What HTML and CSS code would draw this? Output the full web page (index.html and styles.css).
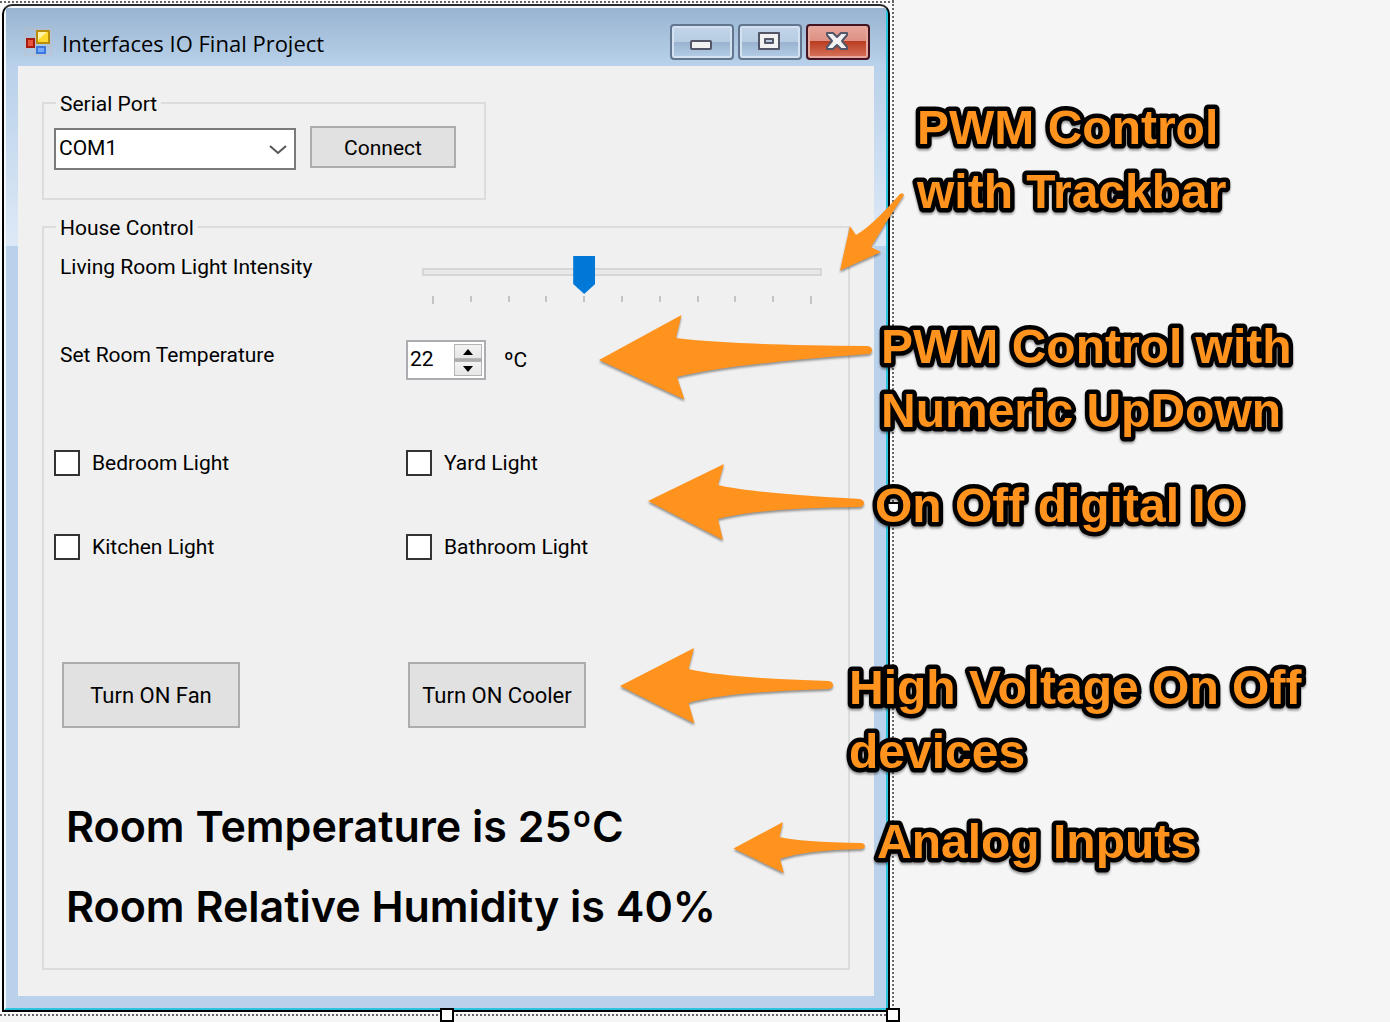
FILE: index.html
```html
<!DOCTYPE html>
<html lang="en">
<head>
<meta charset="utf-8">
<title>Interfaces IO Final Project</title>
<link rel="stylesheet" href="styles.css">
</head>
<body>
<main class="canvas">
  <div class="designer">
    <section class="window">
      <div class="frame">
        <header class="titlebar">
          <svg class="app-icon" width="28" height="28" viewBox="0 0 28 28" aria-hidden="true">
            <path d="M1 1H27V27H1ZM1 9H12M11 1V27M1 19H27" fill="none" stroke="#c3bcc0" opacity=".7"/>
            <rect x="3" y="11" width="7" height="8" fill="#e8543c" stroke="#a81c10" stroke-width="2"/>
            <rect x="13" y="3" width="12" height="12" fill="#ffd92e" stroke="#b98d0c" stroke-width="2"/>
            <path d="M14 4h9l-9 8z" fill="#fff3a8"/>
            <rect x="13" y="19" width="8" height="6" fill="#74a9ff" stroke="#3c78dc" stroke-width="2"/>
          </svg>
          <h1 class="title">Interfaces IO Final Project</h1>
          <div class="caption-buttons">
            <button class="caption" type="button" aria-label="Minimize">
              <svg width="24" height="20" viewBox="0 0 24 20"><rect x="1" y="9" width="20" height="8" rx="1" fill="#f2f2f2" stroke="#535666" stroke-width="2"/></svg>
            </button>
            <button class="caption" type="button" aria-label="Maximize">
              <svg width="24" height="20" viewBox="0 0 24 20"><path d="M1 1h20v16H1zM7 7v4h8V7z" fill="#f2f2f2" fill-rule="evenodd" stroke="#535666" stroke-width="2" stroke-linejoin="round"/></svg>
            </button>
            <button class="caption caption-close" type="button" aria-label="Close">
              <svg width="24" height="20" viewBox="0 0 24 20"><path d="M1 1h6l4 4 4-4h6v2l-5 6 5 6v2h-6l-4-4-4 4H1v-2l5-6-5-6z" fill="#f2f2f2" stroke="#535666" stroke-width="2" stroke-linejoin="round"/></svg>
            </button>
          </div>
        </header>
        <form class="client">
          <fieldset class="group group-port">
            <legend>Serial Port</legend>
            <div class="port-row">
              <div class="combo">
                <select aria-label="Serial Port"><option>COM1</option></select>
                <svg class="combo-arrow" width="18" height="12" viewBox="0 0 18 12" aria-hidden="true"><path d="M1 2l8 7 8-7" fill="none" stroke="#555" stroke-width="2"/></svg>
              </div>
              <button class="button button-connect" type="button">Connect</button>
            </div>
          </fieldset>
          <fieldset class="group group-house">
            <legend>House Control</legend>
            <div class="row">
              <label class="row-label" for="intensity">Living Room Light Intensity</label>
              <div class="trackbar">
                <input id="intensity" type="range" min="0" max="10" value="4">
                <div class="ticks"><i></i><i></i><i></i><i></i><i></i><i></i><i></i><i></i><i></i><i></i><i></i></div>
              </div>
            </div>
            <div class="row row-temperature">
              <label class="row-label" for="temperature">Set Room Temperature</label>
              <div class="numeric-cell">
                <div class="numeric">
                  <input id="temperature" type="number" value="22">
                  <div class="spinner">
                    <button type="button" aria-label="Up"><svg width="12" height="6" viewBox="0 0 12 6"><path d="M1 6L6 0l5 6z"/></svg></button>
                    <button type="button" aria-label="Down"><svg width="12" height="6" viewBox="0 0 12 6"><path d="M1 0l5 6 5-6z"/></svg></button>
                  </div>
                </div>
                <span>ºC</span>
              </div>
            </div>
            <div class="row row-lights">
              <label class="check"><input type="checkbox">Bedroom Light</label>
              <label class="check"><input type="checkbox">Yard Light</label>
              <label class="check"><input type="checkbox">Kitchen Light</label>
              <label class="check"><input type="checkbox">Bathroom Light</label>
            </div>
            <div class="devices">
              <button class="button button-device" type="button">Turn ON Fan</button>
              <button class="button button-device" type="button">Turn ON Cooler</button>
            </div>
            <div class="readings">
              <p>Room Temperature is 25ºC</p>
              <p>Room Relative Humidity is 40%</p>
            </div>
          </fieldset>
        </form>
      </div>
    </section>
    <i class="handle handle-right"></i>
    <i class="handle handle-bottom"></i>
    <i class="handle handle-corner"></i>
  </div>
  <svg class="notes" width="800" height="900" viewBox="590 0 800 900">
    <g class="arrows">
      <path d="M840 270.500L850 226L856 235Q872 226 900 194Q903 192 904 195Q887 220 871 247L881 252Z"/>
      <path d="M599 360L681.500 315L676 338Q730 345 868 346Q872 347 872 350Q872 353 869 354Q730 364 677 377L684.500 399.500Z"/>
      <path d="M648 501L724 464L718 485Q750 493 860 499Q864 500 864 503Q864 506 860 507Q756 508 718 519L723 540Z"/>
      <path d="M620 686L694 648L688.500 669Q725 678 829 681Q833 682 833 685Q833 688 829 689Q726 692 688.500 703L694.500 723.500Z"/>
      <path d="M733.500 848.500L783 822L779.500 837Q800 842 862 843Q865 844 865 846Q865 848 862 849Q805 850 780 859L784 873Z"/>
    </g>
    <g class="note-text">
      <text x="917" y="144">PWM Control</text>
      <text x="917" y="208">with Trackbar</text>
      <text x="881" y="363">PWM Control with</text>
      <text x="881" y="427">Numeric UpDown</text>
      <text x="875" y="522">On Off digital IO</text>
      <text x="849" y="704">High Voltage On Off</text>
      <text x="849" y="768">devices</text>
      <text x="877" y="858">Analog Inputs</text>
    </g>
  </svg>
</main>
</body>
</html>
```
FILE: styles.css
```css
* { box-sizing: border-box; }

body {
  margin: 0;
  background: #f5f5f5;
  color: #000;
  font: 21px/24px Roboto, "Liberation Sans", sans-serif;
}

button, input, select { font: inherit; color: inherit; margin: 0; }
button { padding: 0; }

.canvas { position: relative; min-height: 100vh; overflow: hidden; }

/* Selected form with its dotted selection outline */
.designer {
  position: relative;
  width: calc(100% - 496px);
  padding: 4px 4px 4px 2px;
  background:
    repeating-linear-gradient(90deg, #666 0 2px, #f8f8f8 2px 4px) 0 1px / 100% 2px no-repeat,
    repeating-linear-gradient(90deg, #666 0 2px, #f8f8f8 2px 4px) 0 100% / 100% 2px no-repeat,
    repeating-linear-gradient(#666 0 2px, #f8f8f8 2px 4px) 100% 0 / 2px 100% no-repeat,
    #fafafa;
}

.handle {
  position: absolute;
  width: 14px;
  height: 14px;
  background: #fff;
  border: 2px solid #000;
}
.handle-right { right: -6px; top: 50%; margin-top: -6px; }
.handle-bottom { left: 50%; bottom: -6px; margin-left: -7px; }
.handle-corner { right: -6px; bottom: -6px; }

.window {
  border: 2px solid #000;
  border-top-color: #2b2b2b;
  border-radius: 10px 10px 0 0;
  background: #000;
}

.frame {
  padding: 0 12px 12px;
  border: 2px solid;
  border-color: #f4f8fc #2cc3de #2cc3de #f4f8fc;
  border-radius: 8px 8px 0 0;
  background: linear-gradient(#99b4d1 0, #b9d1ea 58px, #dce8f6 230px, #dce8f6 238px, #b9d1ea 238px);
}

.titlebar {
  display: flex;
  align-items: flex-start;
  height: 58px;
  margin: 0 -12px;
  padding: 16px 16px 0 18px;
  background: linear-gradient(#99b4d1, #b9d1ea);
}
.app-icon { margin-top: 4px; }
.title {
  flex: 1;
  margin: 0 0 0 10px;
  font: 400 22px/38px "Open Sans", sans-serif;
  white-space: nowrap;
}
.caption-buttons { display: flex; gap: 4px; }
.caption {
  display: grid;
  place-items: center;
  width: 64px;
  height: 36px;
  border: 2px solid #63768f;
  border-radius: 4px;
  box-shadow: inset 0 0 0 2px #d3e1f0;
  background: linear-gradient(#c3d5e9 0, #b7cce2 50%, #99b3d0 50%, #b5cde6 100%);
}
.caption-close {
  border-color: #431422;
  box-shadow: inset 0 0 0 2px #e6a79f;
  background: linear-gradient(#e8a79c 0, #dd8f82 48%, #b93d20 48%, #d8755f 100%);
}

.client { padding: 25px 24px 26px; background: #f0f0f0; }

.group { min-width: 0; margin: 0; border: 2px solid #dcdcdc; }
.group legend { margin-left: 2px; padding: 2px 4px 0; line-height: 22px; }
.group-port { width: fit-content; padding: 11px 28px 28px 10px; }
.group-house { margin-top: 15px; padding: 15px 10px 38px; }

.port-row { display: flex; align-items: flex-start; gap: 14px; }
.combo { position: relative; margin-top: 2px; }
.combo select {
  display: block;
  appearance: none;
  width: 242px;
  height: 42px;
  padding: 0 32px 2px 3px;
  border: 2px solid #7a7a7a;
  border-radius: 0;
  background: #fff;
}
.combo-arrow { position: absolute; right: 9px; top: 16px; pointer-events: none; }

.button { padding-top: 2px; border: 2px solid #adadad; background: #e1e1e1; }
.button-connect { width: 146px; height: 42px; }
.button-device { width: 178px; height: 66px; font-size: 22px; }

.row { display: grid; grid-template-columns: 22fr 27fr; align-items: start; }
.row-label { padding-left: 6px; line-height: 26px; }

.trackbar { padding: 2px 16px 0; }
.trackbar input {
  display: block;
  appearance: none;
  width: 100%;
  height: 38px;
  background:
    linear-gradient(#d6d6d6, #d6d6d6) 0 12px / 2px 8px no-repeat,
    linear-gradient(#d6d6d6, #d6d6d6) 100% 12px / 2px 8px no-repeat,
    linear-gradient(#d6d6d6 2px, #e7e8e9 2px 6px, #d6d6d6 6px) 0 12px / 100% 8px no-repeat;
}
.trackbar input::-webkit-slider-thumb {
  appearance: none;
  width: 22px;
  height: 38px;
  background: #0078d7;
  clip-path: polygon(0 0, 100% 0, 100% 28px, 50% 100%, 0 28px);
}
.ticks { display: flex; justify-content: space-between; height: 8px; margin: 2px 10px 0; }
.ticks i { width: 2px; height: 6px; background: #c4c4c4; }
.ticks i:first-child, .ticks i:last-child { height: 8px; }

.row-temperature { margin-top: 36px; }
.row-temperature .row-label { margin-top: 2px; }
.numeric-cell { display: flex; align-items: center; gap: 18px; }
.numeric {
  display: flex;
  width: 80px;
  height: 40px;
  padding: 2px;
  border: 2px solid #abadb3;
  background: #fff;
}
.numeric input {
  appearance: textfield;
  width: 44px;
  height: 30px;
  padding: 0;
  border: 0;
  background: none;
}
.numeric input::-webkit-inner-spin-button { display: none; }
.spinner { display: grid; gap: 2px; width: 28px; height: 32px; background: #acacac; }
.spinner button {
  display: grid;
  place-items: center;
  border: 1px solid #b4b4b4;
  background: linear-gradient(#f3f3f3, #e6e6e6);
}

.row-lights { margin-top: 70px; row-gap: 58px; }
.check { display: flex; align-items: center; gap: 12px; height: 26px; }
.check input {
  appearance: none;
  width: 26px;
  height: 26px;
  border: 2px solid #333;
  background: #fff;
}

.devices { display: flex; gap: 168px; margin-top: 102px; padding-left: 8px; }

.readings { display: grid; gap: 32px; margin-top: 74px; padding-left: 12px; }
.readings p { margin: 0; font: 600 43px/48px Inter, sans-serif; white-space: nowrap; }

/* Callouts laid over the form */
.notes { position: absolute; top: 0; right: 0; pointer-events: none; }
.arrows { fill: #ff931e; filter: drop-shadow(0 2px 1px rgb(0 0 0 / 40%)); }
.note-text {
  font: 700 48px "Liberation Sans", Arial, sans-serif;
  fill: #ff931e;
  stroke: #000;
  stroke-width: 9px;
  stroke-linejoin: round;
  paint-order: stroke;
  filter: drop-shadow(0 2px 1px rgb(0 0 0 / 40%));
}
```
